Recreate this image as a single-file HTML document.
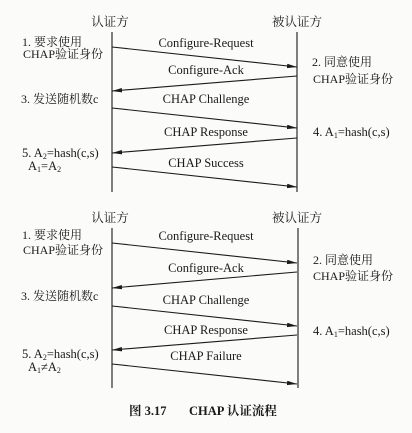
<!DOCTYPE html>
<html><head><meta charset="utf-8"><style>
html,body{margin:0;padding:0;background:#fbfbf9;}
svg{display:block}
text{font-family:"Liberation Serif","Noto Serif CJK SC","Noto Sans CJK SC",serif;font-size:12px;fill:#1a1a1a;dominant-baseline:central;}
.c{text-anchor:middle}
.l{font-size:12.5px}
.cap{font-weight:bold;font-size:12.5px}
</style></head><body>
<svg width="412" height="433" viewBox="0 0 412 433" xmlns="http://www.w3.org/2000/svg">
<defs>
<marker id="a" markerWidth="10" markerHeight="6" refX="10" refY="3" orient="auto" markerUnits="userSpaceOnUse">
<path d="M0,0.8 L10,3 L0,5.2 Z" fill="#1a1a1a"/>
</marker>
</defs>
<g stroke="#1a1a1a" stroke-width="1.1" fill="none">
<line x1="112" y1="32" x2="112" y2="192"/>
<line x1="297" y1="32" x2="297" y2="192"/>
<line x1="112" y1="47" x2="297" y2="67" marker-end="url(#a)"/>
<line x1="297" y1="76" x2="112" y2="91" marker-end="url(#a)"/>
<line x1="112" y1="108" x2="297" y2="128" marker-end="url(#a)"/>
<line x1="297" y1="138" x2="112" y2="153" marker-end="url(#a)"/>
<line x1="112" y1="167" x2="297" y2="187" marker-end="url(#a)"/>

<line x1="112" y1="228" x2="112" y2="388"/>
<line x1="298" y1="228" x2="298" y2="388"/>
<line x1="112" y1="243" x2="297" y2="263" marker-end="url(#a)"/>
<line x1="297" y1="272" x2="112" y2="288" marker-end="url(#a)"/>
<line x1="112" y1="306" x2="297" y2="326" marker-end="url(#a)"/>
<line x1="297" y1="335" x2="112" y2="350" marker-end="url(#a)"/>
<line x1="112" y1="364" x2="297" y2="384" marker-end="url(#a)"/>
</g>

<text class="c l" x="110" y="22">认证方</text>
<text class="c l" x="297" y="22">被认证方</text>
<text x="22" y="42">1. 要求使用</text>
<text x="23" y="54">CHAP验证身份</text>
<text class="c l" x="206" y="43">Configure-Request</text>
<text x="312" y="62">2. 同意使用</text>
<text x="313" y="79">CHAP验证身份</text>
<text class="c l" x="206" y="70">Configure-Ack</text>
<text x="21" y="99">3. 发送随机数c</text>
<text class="c l" x="206" y="99">CHAP Challenge</text>
<text class="c l" x="206" y="132">CHAP Response</text>
<text class="l" x="313" y="132">4. A<tspan font-size="8" dy="3">1</tspan><tspan dy="-3">=hash(c,s)</tspan></text>
<text class="l" x="22" y="153">5. A<tspan font-size="8" dy="3">2</tspan><tspan dy="-3">=hash(c,s)</tspan></text>
<text class="l" x="28" y="166">A<tspan font-size="8" dy="3">1</tspan><tspan dy="-3">=A</tspan><tspan font-size="8" dy="3">2</tspan></text>
<text class="c l" x="206" y="163">CHAP Success</text>

<text class="c l" x="110" y="218">认证方</text>
<text class="c l" x="297" y="218">被认证方</text>
<text x="22" y="235">1. 要求使用</text>
<text x="23" y="250">CHAP验证身份</text>
<text class="c l" x="206" y="236">Configure-Request</text>
<text x="313" y="260">2. 同意使用</text>
<text x="313" y="276">CHAP验证身份</text>
<text class="c l" x="206" y="268">Configure-Ack</text>
<text x="21" y="296">3. 发送随机数c</text>
<text class="c l" x="206" y="300">CHAP Challenge</text>
<text class="c l" x="206" y="330">CHAP Response</text>
<text class="l" x="313" y="331">4. A<tspan font-size="8" dy="3">1</tspan><tspan dy="-3">=hash(c,s)</tspan></text>
<text class="l" x="22" y="354">5. A<tspan font-size="8" dy="3">2</tspan><tspan dy="-3">=hash(c,s)</tspan></text>
<text class="l" x="28" y="367">A<tspan font-size="8" dy="3">1</tspan><tspan dy="-3">≠A</tspan><tspan font-size="8" dy="3">2</tspan></text>
<text class="c l" x="206" y="356">CHAP Failure</text>

<text class="cap" x="129" y="411">图 3.17</text>
<text class="cap" x="189" y="411">CHAP 认证流程</text>
</svg>
</body></html>
